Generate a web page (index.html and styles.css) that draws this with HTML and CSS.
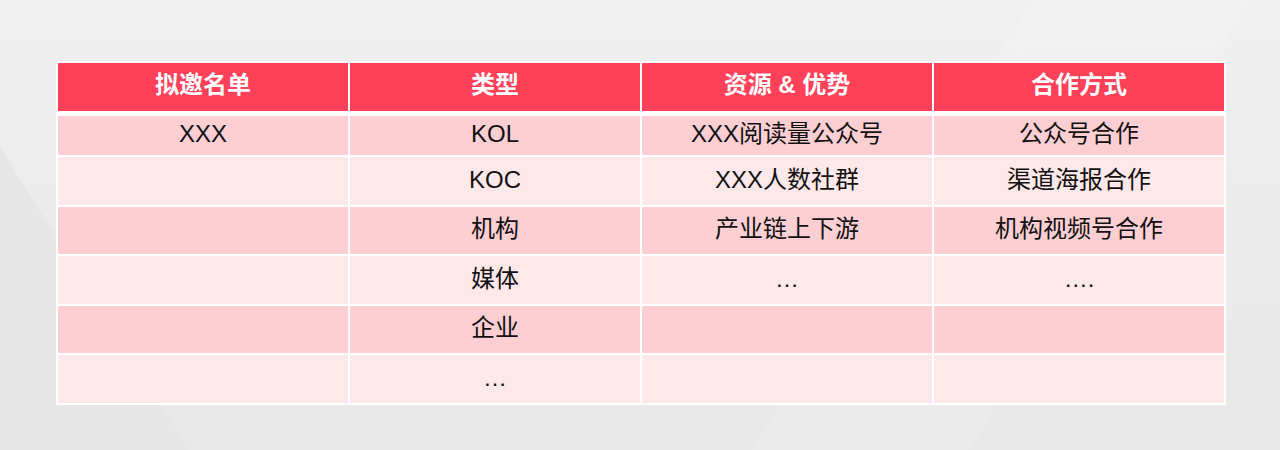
FILE: index.html
```html
<!DOCTYPE html>
<html lang="zh-CN">
<head>
<meta charset="utf-8">
<title>拟邀名单</title>
<link rel="stylesheet" href="styles.css">
</head>
<body>
<main class="stage">
  <div class="table">
    <div class="cell head">拟邀名单</div>
    <div class="cell head">类型</div>
    <div class="cell head">资源 &amp; 优势</div>
    <div class="cell head">合作方式</div>

    <div class="cell dark first">XXX</div>
    <div class="cell dark first">KOL</div>
    <div class="cell dark first">XXX阅读量公众号</div>
    <div class="cell dark first">公众号合作</div>

    <div class="cell light"></div>
    <div class="cell light">KOC</div>
    <div class="cell light">XXX人数社群</div>
    <div class="cell light">渠道海报合作</div>

    <div class="cell dark"></div>
    <div class="cell dark">机构</div>
    <div class="cell dark">产业链上下游</div>
    <div class="cell dark">机构视频号合作</div>

    <div class="cell light"></div>
    <div class="cell light">媒体</div>
    <div class="cell light">…</div>
    <div class="cell light">….</div>

    <div class="cell dark"></div>
    <div class="cell dark">企业</div>
    <div class="cell dark"></div>
    <div class="cell dark"></div>

    <div class="cell light"></div>
    <div class="cell light">…</div>
    <div class="cell light"></div>
    <div class="cell light"></div>
  </div>
</main>
</body>
</html>
```

FILE: styles.css
```css
html, body {
  margin: 0;
  padding: 0;
}

body {
  width: 1280px;
  height: 450px;
  overflow: hidden;
  font-family: "Liberation Sans", "Noto Sans CJK SC", sans-serif;
  background:
    linear-gradient(58deg, #e6e6e6 160px, rgba(230,230,230,0) 161px),
    linear-gradient(122deg, rgba(255,255,255,0) 66%, rgba(255,255,255,0.12) 66.2%, rgba(255,255,255,0.12) 80%, rgba(255,255,255,0) 80.2%),
    linear-gradient(to bottom, #f0f0f0 0%, #ebebeb 45%, #e8e8e8 100%);
}

.stage {
  padding: 61px 0 0 56px;
}

.table {
  display: grid;
  grid-template-columns: repeat(4, 290px);
  grid-template-rows: 48px 42px repeat(5, 47.5px);
  column-gap: 2px;
  row-gap: 2px;
  width: max-content;
  padding: 2px;
  background: #ffffff;
}

.cell {
  display: flex;
  align-items: center;
  justify-content: center;
  font-size: 24px;
  color: #111111;
  line-height: 1;
  padding-bottom: 2px;
  box-sizing: border-box;
}

.head {
  background: #ff4059;
  color: #ffffff;
  font-weight: bold;
  font-size: 24px;
  padding-bottom: 4px;
}

.first {
  margin-top: 3px;
  padding-bottom: 3px;
}

.dark {
  background: #fdcfd2;
}

.light {
  background: #ffe8e9;
}
```
